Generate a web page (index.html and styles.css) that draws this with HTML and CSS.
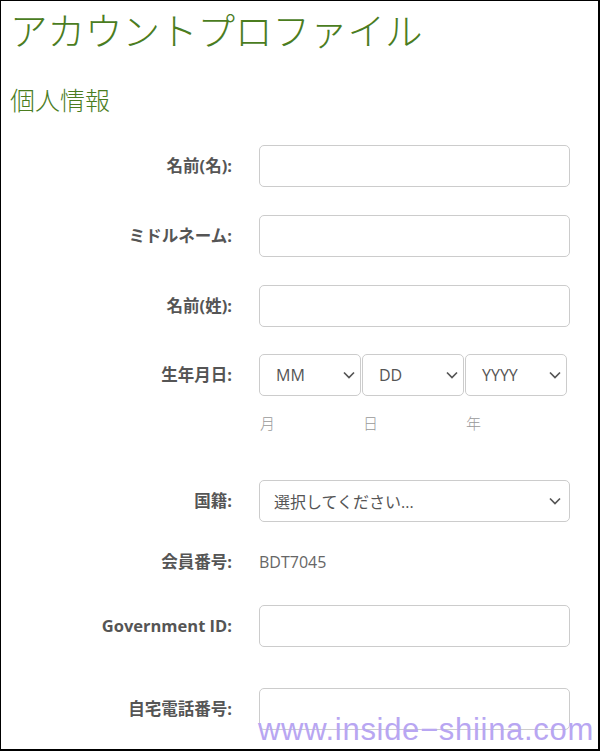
FILE: index.html
```html
<!DOCTYPE html>
<html lang="ja">
<head>
  <meta charset="UTF-8">
  <title>アカウントプロファイル</title>
  <link rel="stylesheet" href="styles.css">
</head>
<body>

  <div class="frame">
    <h1 class="page-title">アカウントプロファイル</h1>
    <h2 class="section-title">個人情報</h2>

    <div class="form">
      <!-- 名前 -->
      <div class="row">
        <label class="row-label">名前(名):</label>
        <input class="field" type="text">
      </div>
      <div class="row">
        <label class="row-label">ミドルネーム:</label>
        <input class="field" type="text">
      </div>
      <div class="row row-last-name">
        <label class="row-label">名前(姓):</label>
        <input class="field" type="text">
      </div>

      <!-- 生年月日 -->
      <div class="row row-date">
        <label class="row-label">生年月日:</label>
        <div class="date-group">
          <div class="date-part">
            <div class="select">
              <span>MM</span>
              <svg class="chevron" viewBox="0 0 12 8"><polyline points="1,1.5 6,6.5 11,1.5"/></svg>
            </div>
            <span class="hint">月</span>
          </div>
          <div class="date-part">
            <div class="select">
              <span>DD</span>
              <svg class="chevron" viewBox="0 0 12 8"><polyline points="1,1.5 6,6.5 11,1.5"/></svg>
            </div>
            <span class="hint">日</span>
          </div>
          <div class="date-part">
            <div class="select">
              <span>YYYY</span>
              <svg class="chevron" viewBox="0 0 12 8"><polyline points="1,1.5 6,6.5 11,1.5"/></svg>
            </div>
            <span class="hint">年</span>
          </div>
        </div>
      </div>

      <!-- 国籍 -->
      <div class="row row-country">
        <label class="row-label">国籍:</label>
        <div class="select select-wide">
          <span>選択してください...</span>
          <svg class="chevron" viewBox="0 0 12 8"><polyline points="1,1.5 6,6.5 11,1.5"/></svg>
        </div>
      </div>

      <div class="row row-member">
        <label class="row-label">会員番号:</label>
        <span class="value">BDT7045</span>
      </div>

      <div class="row row-gov">
        <label class="row-label">Government ID:</label>
        <input class="field" type="text">
      </div>

      <div class="row">
        <label class="row-label">自宅電話番号:</label>
        <input class="field" type="text">
      </div>
    </div>

    <div class="watermark">www.inside−shiina.com</div>
  </div>

</body>
</html>
```

FILE: styles.css
```css
body {
  margin: 0;
  font-family: 'Open Sans', 'Noto Sans CJK JP', sans-serif;
  color: #555;
  background: #fff;
}

.frame {
  position: relative;
  box-sizing: border-box;
  width: 600px;
  height: 751px;
  overflow: hidden;
  border-top: 1px solid #000;
  border-left: 1px solid #000;
  border-right: 2px solid #000;
  border-bottom: 2px solid #000;
}

.page-title {
  margin: 0 0 0 9px;
  font-family: 'Noto Sans CJK JP', sans-serif;
  font-size: 37.5px;
  font-weight: 300;
  line-height: 55px;
  color: #4b7d1f;
}

.section-title {
  margin: 28px 0 0 9px;
  font-family: 'Noto Sans CJK JP', sans-serif;
  font-size: 25px;
  font-weight: 300;
  line-height: 30px;
  color: #4b7d1f;
}

.form {
  margin-top: 31px;
}

.row {
  display: grid;
  grid-template-columns: 231px 311px;
  column-gap: 27px;
  align-items: start;
  margin-bottom: 28px;
}

.row-label {
  text-align: right;
  font-size: 16.5px;
  font-weight: 700;
  line-height: 42px;
  color: #555;
}

.field {
  box-sizing: border-box;
  width: 311px;
  height: 42px;
  margin: 0;
  border: 1px solid #ccc;
  border-radius: 5px;
  background: #fff;
}

.row-last-name {
  margin-bottom: 27px;
}

.row-date {
  margin-bottom: 47px;
}

.date-group {
  display: grid;
  grid-template-columns: repeat(3, 102px);
  column-gap: 1px;
}

.date-part {
  display: flex;
  flex-direction: column;
}

.select {
  box-sizing: border-box;
  height: 42px;
  display: flex;
  align-items: center;
  justify-content: space-between;
  padding: 0 5px 0 16px;
  border: 1px solid #ccc;
  border-radius: 5px;
  font-size: 16px;
  color: #555;
}

.select-wide {
  width: 311px;
  padding: 0 8px 0 14px;
}

.chevron {
  width: 12px;
  height: 8px;
  fill: none;
  stroke: #555;
  stroke-width: 1.7;
}

.hint {
  margin-top: 17px;
  padding-left: 1px;
  font-size: 15px;
  line-height: 20px;
  font-weight: 300;
  color: #999;
}

.row-country {
  margin-bottom: 19px;
}

.row-member {
  margin-bottom: 22px;
}

.row-gov {
  margin-bottom: 41px;
}

.value {
  font-size: 16px;
  line-height: 42px;
  color: #666;
}

.watermark {
  position: absolute;
  left: 257px;
  top: 709px;
  font-family: 'Liberation Sans', sans-serif;
  font-size: 31px;
  letter-spacing: 0.7px;
  line-height: 40px;
  color: #b8a6f2;
  white-space: nowrap;
}
```
